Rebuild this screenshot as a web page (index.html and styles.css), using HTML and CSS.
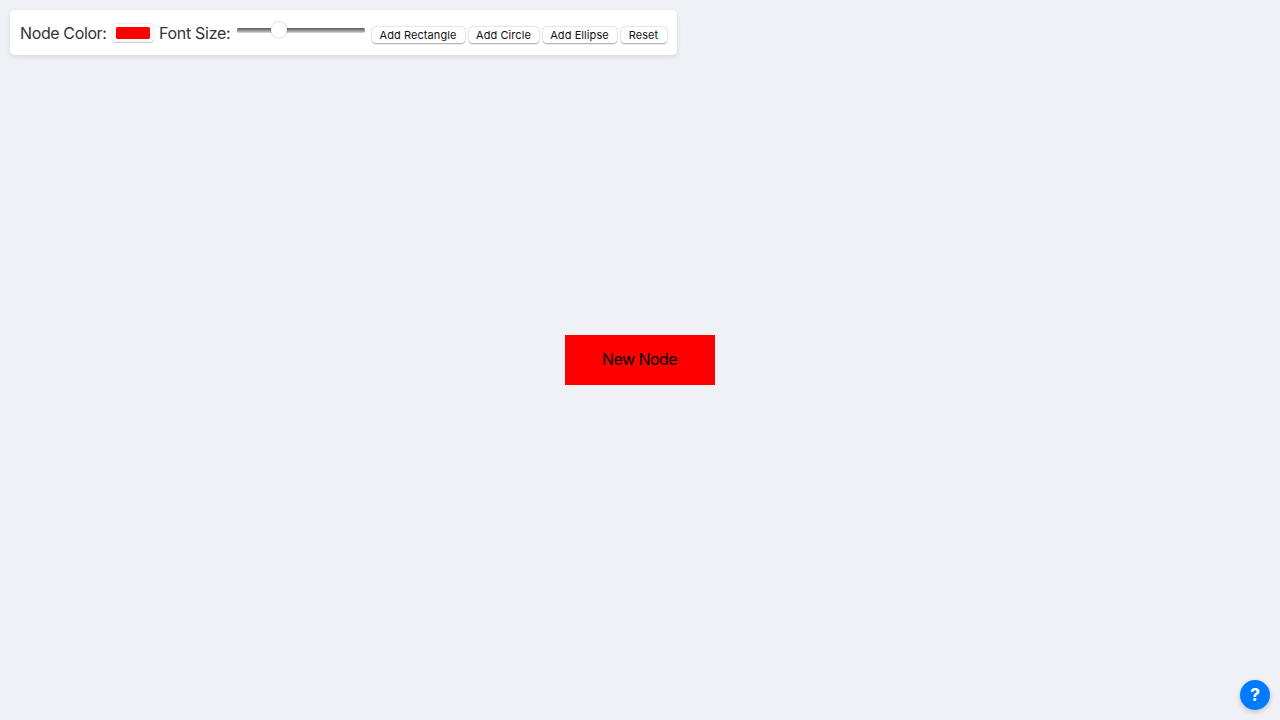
FILE: index.html
```html
<!DOCTYPE html>
<html lang="en">
<head>
<meta charset="utf-8">
<title>Node Editor</title>
<link rel="stylesheet" href="styles.css">
</head>
<body>
<div class="toolbar">
  <label class="label label-color" for="color">Node Color:</label>
  <input class="color" id="color" type="color" value="#ff0000">
  <label class="label label-size" for="size">Font Size:</label>
  <input class="slider" id="size" type="range" min="10" max="30" value="16">
  <div class="actions">
    <button class="button rectangle">Add Rectangle</button>
    <button class="button circle">Add Circle</button>
    <button class="button ellipse">Add Ellipse</button>
    <button class="button reset">Reset</button>
  </div>
</div>
<main class="canvas">
  <div class="node">New Node</div>
</main>
<button class="help">?</button>
</body>
</html>
```
FILE: styles.css
```css
* { box-sizing: border-box; }
body {
  margin: 0;
  height: 100vh;
  overflow: hidden;
  background: #f0f1f6;
  color: #333;
  font-family: Inter, "Liberation Sans", sans-serif;
}
.toolbar {
  position: absolute;
  top: 10px;
  left: 10px;
  z-index: 1;
  display: flex;
  align-items: flex-start;
  width: 666.5px;
  height: 45px;
  padding: 0 10px;
  background: #fff;
  border-radius: 5px;
  box-shadow: 0 2px 5px rgba(0, 0, 0, 0.1);
}
.label {
  flex: none;
  padding-top: 13px;
  font-size: 16px;
  line-height: 20px;
  white-space: nowrap;
}
.label-color { width: 92px; letter-spacing: -0.38px; }
.label-size { width: 78px; letter-spacing: -0.3px; }
.color {
  appearance: none;
  flex: none;
  width: 42px;
  height: 19px;
  margin: 13px 5px 0 0;
  padding: 4px 4px 3px;
  border: 0;
  border-radius: 4px;
  background: #fff;
  box-shadow: inset 0 0 0 1px #f0f0f0, 0 0.5px 1px rgba(0, 0, 0, 0.2);
}
.color::-webkit-color-swatch-wrapper { padding: 0; }
.color::-webkit-color-swatch { border: 0; border-radius: 1.5px; }
.slider {
  appearance: none;
  flex: none;
  width: 128px;
  height: 16px;
  margin: 12px 7px 0 0;
  background: transparent;
}
.slider::-webkit-slider-runnable-track {
  height: 5px;
  border-radius: 1.5px;
  background: linear-gradient(#646464 0 1px, #7c7c7c 1px 2px, #949494 2px 3px, #adadad 3px 4px, #d0d0d0 4px);
}
.slider::-webkit-slider-thumb {
  appearance: none;
  width: 16px;
  height: 16px;
  margin-top: -6px;
  border-radius: 50%;
  background: #fff;
  box-shadow: 0 0 1px 0.5px rgba(0, 0, 0, 0.22);
}
.actions { display: flex; flex: none; gap: 4px; padding-top: 17px; }
.button {
  height: 16px;
  padding: 0 1px 0 0;
  border: 0;
  border-radius: 4px;
  background: #fff;
  color: #111;
  font: 400 11px/16px Inter, "Liberation Sans", sans-serif;
  letter-spacing: 0.08px;
  white-space: nowrap;
  box-shadow: 0 0 0 0.5px rgba(0, 0, 0, 0.06), 0 0.5px 1.5px rgba(0, 0, 0, 0.35);
}
.rectangle { width: 93px; }
.circle { width: 70px; }
.ellipse { width: 74px; }
.reset { width: 46px; }
.canvas {
  display: flex;
  align-items: center;
  justify-content: center;
  height: 100%;
}
.node {
  width: 150px;
  height: 50px;
  padding-right: 1px;
  background: #f00;
  color: #000;
  font-size: 16px;
  line-height: 49px;
  letter-spacing: -0.55px;
  text-align: center;
}
.help {
  position: absolute;
  right: 10px;
  bottom: 10px;
  width: 30px;
  height: 30px;
  padding: 0;
  border: 0;
  border-radius: 50%;
  background: #007bff;
  color: #fff;
  font: 700 18px/30px Inter, "Liberation Sans", sans-serif;
  box-shadow: 0 2px 5px rgba(0, 0, 0, 0.2);
}
```
